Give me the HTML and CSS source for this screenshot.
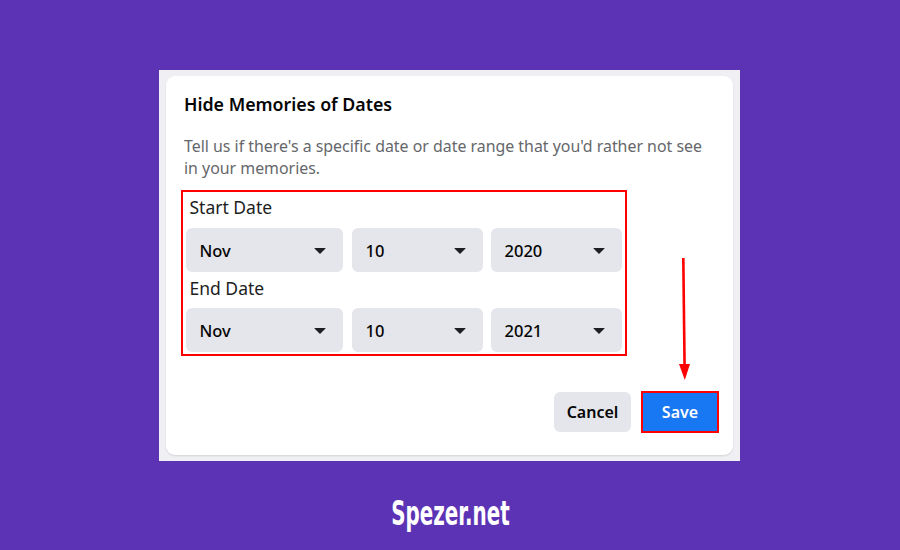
FILE: index.html
```html
<!DOCTYPE html>
<html>
<head>
<meta charset="utf-8">
<link rel="stylesheet" href="styles.css">
</head>
<body>
<div class="page">
  <div class="frame">
    <div class="card">
      <h1 class="title">Hide Memories of Dates</h1>
      <p class="desc">Tell us if there's a specific date or date range that you'd rather not see in your memories.</p>
      <div class="highlight">
        <div class="label first">Start Date</div>
        <div class="row">
          <div class="select w-month"><span>Nov</span><i class="caret"></i></div>
          <div class="select w-day"><span>10</span><i class="caret"></i></div>
          <div class="select w-year"><span>2020</span><i class="caret"></i></div>
        </div>
        <div class="label second">End Date</div>
        <div class="row">
          <div class="select w-month"><span>Nov</span><i class="caret"></i></div>
          <div class="select w-day"><span>10</span><i class="caret"></i></div>
          <div class="select w-year"><span>2021</span><i class="caret"></i></div>
        </div>
      </div>
      <div class="actions">
        <div class="btn cancel">Cancel</div>
        <div class="save-box"><div class="btn save">Save</div></div>
      </div>
      <svg class="arrow" width="20" height="130" viewBox="0 0 20 130">
        <line x1="9.3" y1="2" x2="10.6" y2="112" stroke="#ff0000" stroke-width="2.6"/>
        <polygon points="5,108 16,108 10.8,124" fill="#ff0000"/>
      </svg>
    </div>
  </div>
  <div class="brand">Spezer.net</div>
</div>
</body>
</html>
```
FILE: styles.css
```css
* { box-sizing: border-box; }
html, body { margin: 0; padding: 0; }
body {
  width: 900px;
  height: 550px;
  background: #5c33b5;
  font-family: "Noto Sans", "Open Sans", sans-serif;
  overflow: hidden;
}
.page {
  display: flex;
  flex-direction: column;
  align-items: center;
  padding-top: 70px;
}
.frame {
  width: 581px;
  height: 391px;
  background: #efeff4;
  padding: 6px 7px;
  margin-left: -1px;
}
.card {
  position: relative;
  height: 100%;
  background: #ffffff;
  border-radius: 9px;
  box-shadow: 0 1px 2px rgba(0,0,0,0.12);
  padding: 16px 14px 0 18px;
}
.title {
  margin: 0;
  font-size: 17.8px;
  line-height: 24px;
  font-weight: 600;
  color: #050505;
}
.desc {
  margin: 19px 0 0 0;
  font-size: 15.9px;
  line-height: 22px;
  color: #65676b;
  width: 530px;
}
.highlight {
  margin: 11px 0 0 -3px;
  width: 446px;
  border: 2.5px solid #ff0000;
  padding: 2.5px;
}
.label {
  font-size: 17.5px;
  line-height: 24px;
  color: #1c1e21;
  padding-left: 4px;
}
.label.first { margin-bottom: 9px; }
.label.second { margin: 4px 0 8px 0; }
.row {
  display: flex;
  gap: 8px;
}
.select {
  height: 44px;
  background: #e4e6eb;
  border-radius: 6px;
  display: flex;
  align-items: center;
  justify-content: space-between;
  padding: 2px 17px 0 14px;
  font-size: 16.5px;
  font-weight: 500;
  color: #050505;
}
.w-month { width: 157px; margin-right: 1px; }
.w-day { width: 131px; }
.w-year { width: 131px; }
.caret {
  width: 0;
  height: 0;
  border-left: 6px solid transparent;
  border-right: 6px solid transparent;
  border-top: 6px solid #1c1e21;
  border-radius: 1px;
}
.actions {
  margin-top: 35px;
  display: flex;
  justify-content: flex-end;
  align-items: center;
  gap: 10px;
}
.btn {
  display: flex;
  align-items: center;
  justify-content: center;
  border-radius: 6px;
  font-size: 16px;
  font-weight: 600;
}
.cancel {
  width: 77px;
  height: 40px;
  background: #e4e6eb;
  color: #050505;
}
.save-box {
  width: 78px;
  height: 42px;
  border: 2.5px solid #ff0000;
  padding: 0;
}
.save {
  width: 100%;
  height: 100%;
  background: #1877f2;
  color: #ffffff;
  border-radius: 0;
}
.arrow {
  position: absolute;
  left: 508px;
  top: 180px;
}
.brand {
  margin-top: 35px;
  font-family: "DejaVu Sans Condensed", "DejaVu Sans", sans-serif;
  font-weight: 700;
  font-size: 33px;
  line-height: 36px;
  color: #ffffff;
  transform: scaleX(0.67);
}
```
